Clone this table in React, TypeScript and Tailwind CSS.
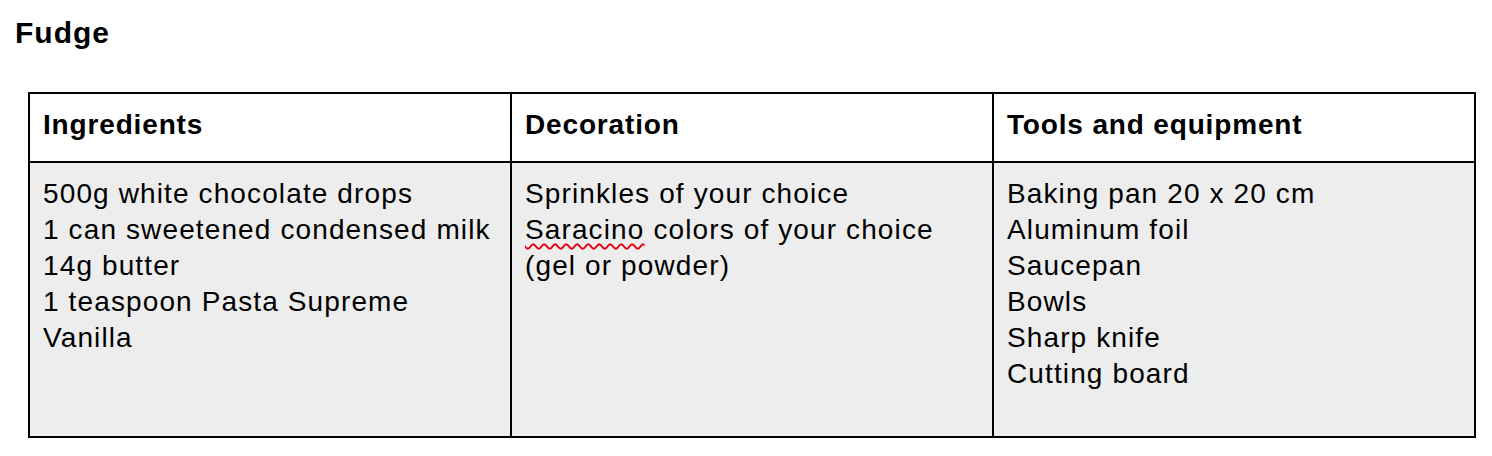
import React from 'react';

const ingredients = [
  '500g white chocolate drops',
  '1 can sweetened condensed milk',
  '14g butter',
  '1 teaspoon Pasta Supreme',
  'Vanilla',
];

const tools = [
  'Baking pan 20 x 20 cm',
  'Aluminum foil',
  'Saucepan',
  'Bowls',
  'Sharp knife',
  'Cutting board',
];

function HeadCell({ children, last }: { children: React.ReactNode; last?: boolean }) {
  return (
    <div className={`h-[69px] border-b-2 border-black bg-white pl-[13px] pt-[13px] text-[28px] leading-[36px] font-bold tracking-[0.03em] ${last ? '' : 'border-r-2'}`}>
      {children}
    </div>
  );
}

function BodyCell({ children, last }: { children: React.ReactNode; last?: boolean }) {
  return (
    <div className={`h-[273px] border-black bg-[#ededed] pl-[13px] pt-[13px] text-[28px] leading-[36px] tracking-[0.04em] ${last ? '' : 'border-r-2'}`}>
      {children}
    </div>
  );
}

export default function App() {
  return (
    <div className="min-h-screen bg-white px-[15px] pt-[15px] text-black" style={{ fontFamily: '"Liberation Sans", Arial, sans-serif' }}>
      <h1 className="text-[30px] leading-[36px] font-bold tracking-[0.033em]">Fudge</h1>

      <div className="ml-[13px] mt-[41px] w-[1448px] border-2 border-black">
        <div className="grid grid-cols-[482px_482px_480px]">
          <HeadCell>Ingredients</HeadCell>
          <HeadCell>Decoration</HeadCell>
          <HeadCell last>Tools and equipment</HeadCell>

          <BodyCell>
            {ingredients.map(i => (
              <div key={i}>{i}</div>
            ))}
          </BodyCell>
          <BodyCell>
            <div>Sprinkles of your choice</div>
            <div>
              <span className="underline decoration-wavy decoration-red-600 decoration-[1.5px] underline-offset-4">Saracino</span> colors of your choice
            </div>
            <div>(gel or powder)</div>
          </BodyCell>
          <BodyCell last>
            {tools.map(t => (
              <div key={t}>{t}</div>
            ))}
          </BodyCell>
        </div>
      </div>
    </div>
  );
}
